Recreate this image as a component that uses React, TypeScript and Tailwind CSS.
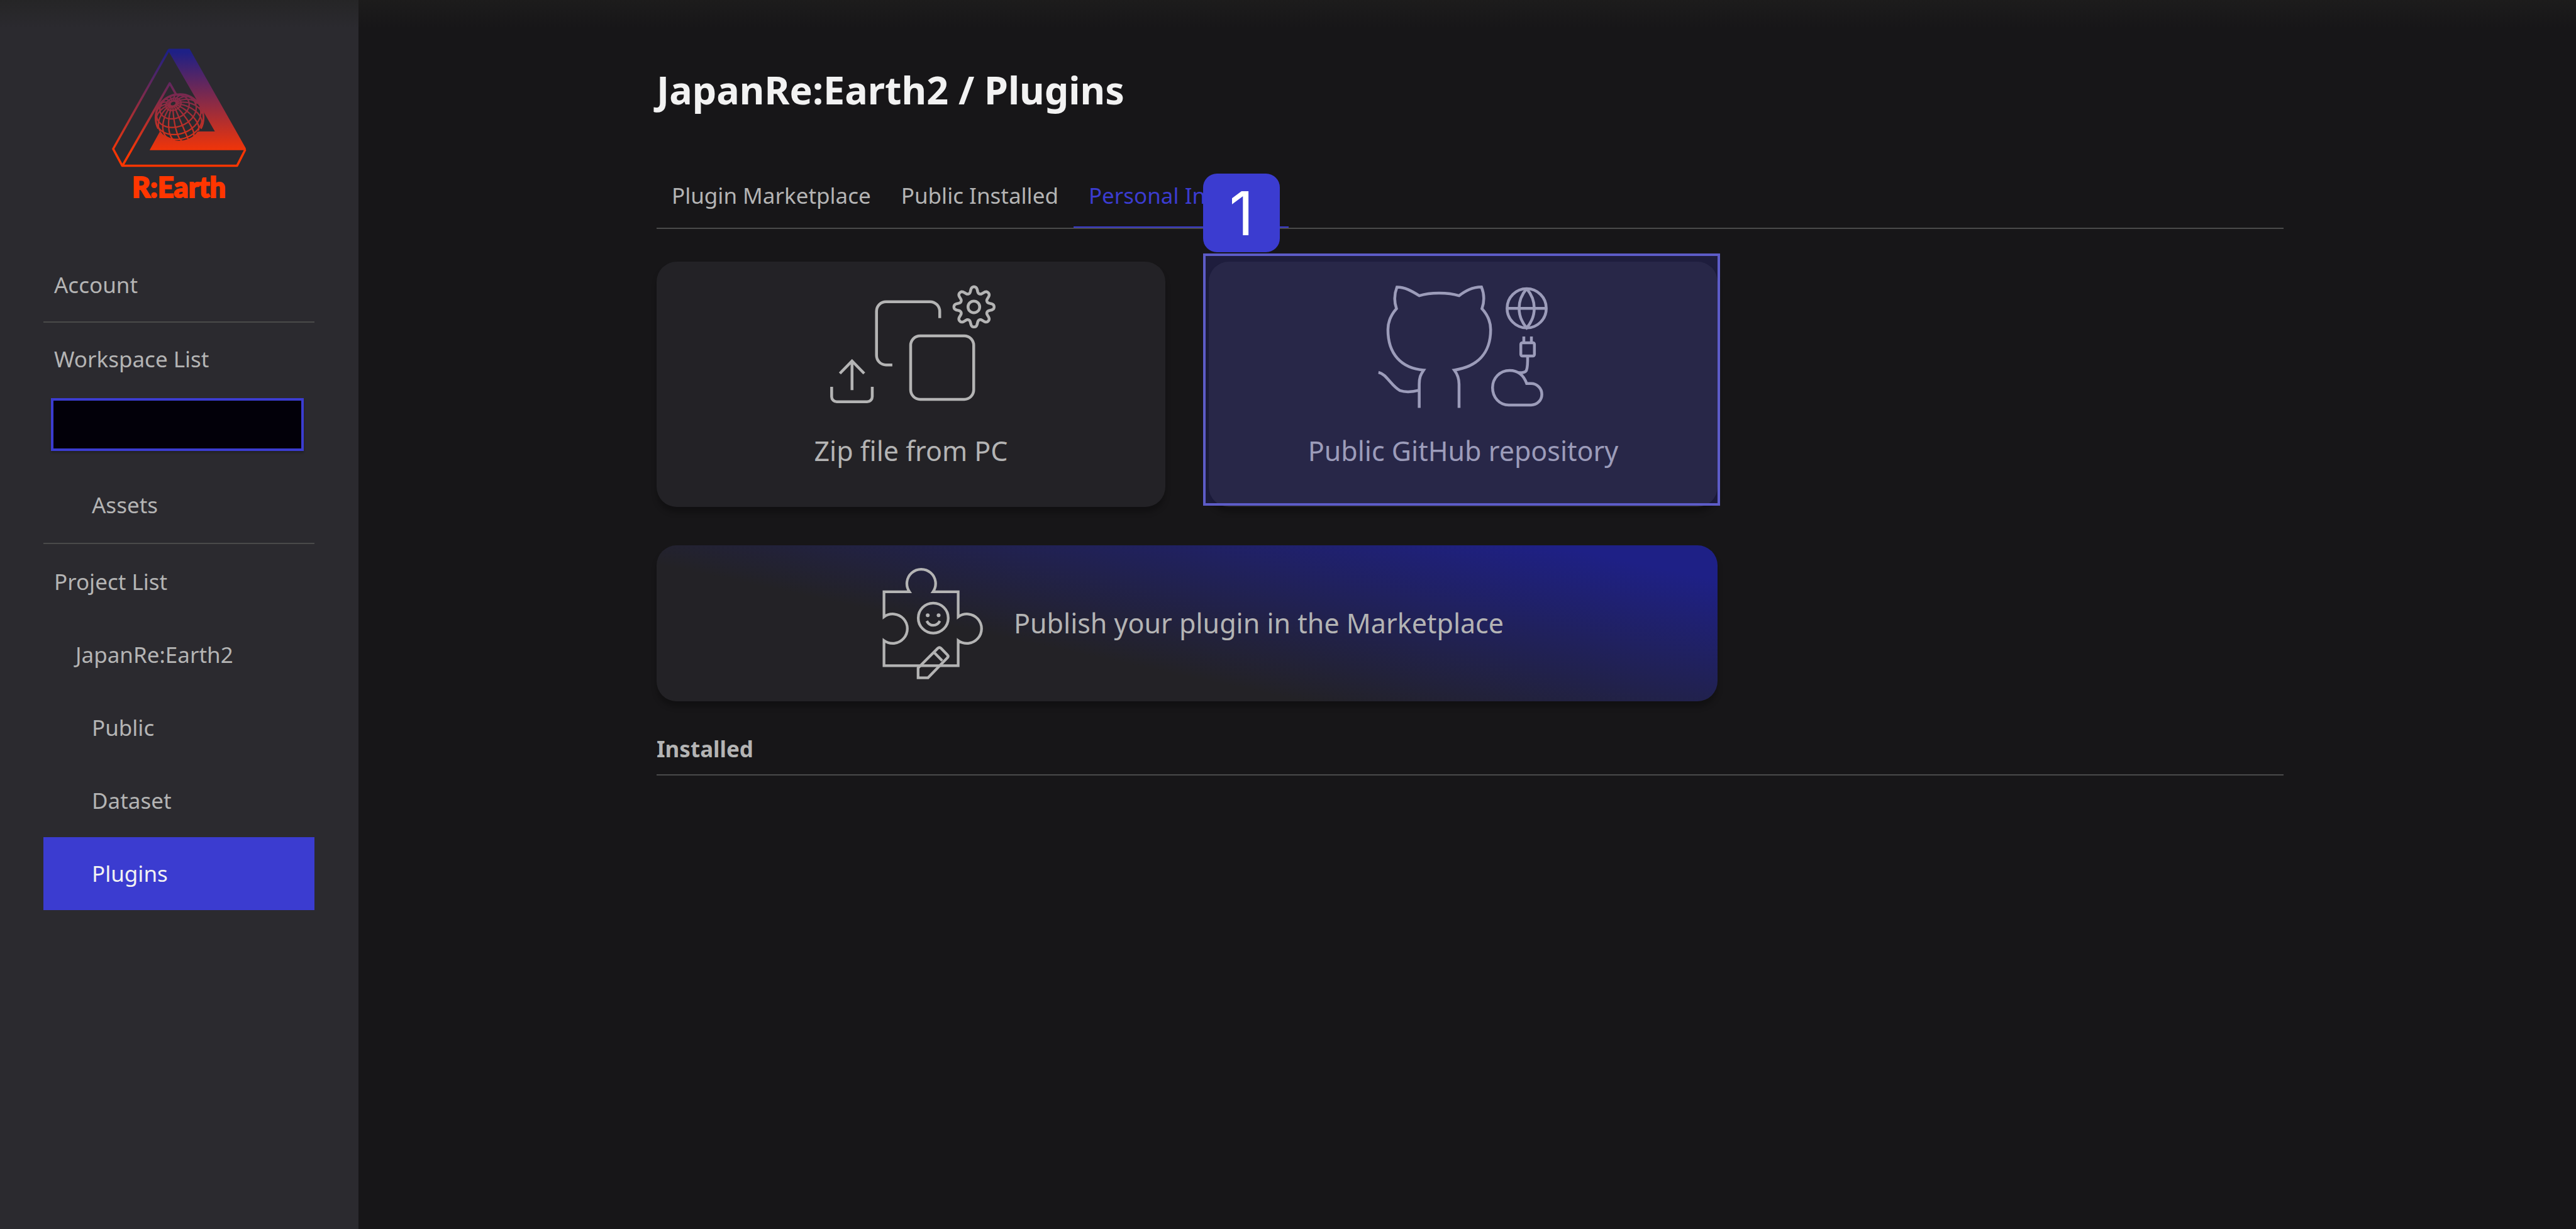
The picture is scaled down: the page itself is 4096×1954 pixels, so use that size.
import type { ReactNode } from "react";

const GLOBE = { x: 531, y: 563, r: 146 };

/** Great circles and parallels of a tilted sphere, visible half only. */
function graticule(): string {
  const { x: cx, y: cy, r } = GLOBE;
  const poleDistance = 0.67;
  const roll = -0.4;
  const cosTilt = Math.sqrt(1 - poleDistance * poleDistance);
  const project = (colat: number, lon: number) => {
    const sx = Math.sin(colat) * Math.sin(lon);
    const sy = Math.cos(colat);
    const sz = Math.sin(colat) * Math.cos(lon);
    const py = sy * poleDistance - sz * cosTilt;
    const depth = sy * cosTilt + sz * poleDistance;
    const rx = sx * Math.cos(roll) + py * Math.sin(roll);
    const ry = -sx * Math.sin(roll) + py * Math.cos(roll);
    return { x: cx + rx * r, y: cy - ry * r, visible: depth >= 0 };
  };
  const trace = (points: { x: number; y: number; visible: boolean }[]) => {
    let path = "";
    let drawing = false;
    for (const p of points) {
      if (p.visible) {
        path += `${drawing ? "L" : "M"}${p.x.toFixed(1)} ${p.y.toFixed(1)}`;
      }
      drawing = p.visible;
    }
    return path;
  };
  const rad = Math.PI / 180;
  let d = "";
  for (let lon = 0; lon < 360; lon += 20) {
    const points = [];
    for (let colat = 8; colat <= 170; colat += 3) points.push(project(colat * rad, lon * rad));
    d += trace(points);
  }
  for (const colat of [8, 20, 41, 63, 85, 108]) {
    const points = [];
    for (let lon = 0; lon <= 360; lon += 4) points.push(project(colat * rad, lon * rad));
    d += trace(points);
  }
  return d;
}

/** Closed outline of an eight-toothed wheel. */
function gear(cx: number, cy: number): string {
  const steps = 240;
  let d = "";
  for (let i = 0; i < steps; i++) {
    const a = (i / steps) * Math.PI * 2;
    const wave = Math.tanh(1.3 * Math.cos(8 * a)) / Math.tanh(1.3);
    const r = 108 + 19 * wave;
    d += `${i === 0 ? "M" : "L"}${(cx + r * Math.cos(a)).toFixed(1)} ${(cy + r * Math.sin(a)).toFixed(1)}`;
  }
  return `${d}Z`;
}

const graticulePath = graticule();
const gearPath = gear(967, 201);

function Logo() {
  return (
    <a href="#home" className="flex flex-col items-center text-[#ff3600]">
      <svg viewBox="92 118 880 770" className="h-[194px] w-[222px]" fill="none" aria-hidden="true">
        <defs>
          <linearGradient id="flame" gradientUnits="userSpaceOnUse" x1="0" y1="150" x2="0" y2="810">
            <stop offset="0" stopColor="#1e2086" />
            <stop offset="1" stopColor="#ff3600" />
          </linearGradient>
        </defs>
        <path
          fill="url(#flame)"
          d="M465 128H597L952 756V768H345L410 650H757L465 145Z"
        />
        <g stroke="url(#flame)" strokeWidth="14" strokeLinejoin="round">
          <path d="M467 134L115 760L172 866H897L949 764" />
          <path d="M176 862L472 346L520 430" />
        </g>
        <circle cx={GLOBE.x} cy={GLOBE.y} r={GLOBE.r} fill="#2b2a2f" />
        <path d={graticulePath} stroke="url(#flame)" strokeWidth="9" />
        <path
          d="M400 632A148 148 0 0 1 531 415A148 148 0 0 1 668 632"
          stroke="url(#flame)"
          strokeWidth="12"
        />
      </svg>
      <span className="font-['Lato',sans-serif] text-[45px] leading-[56px] font-black [-webkit-text-stroke:2px_#ff3600]">
        R:Earth
      </span>
    </a>
  );
}

function ZipIcon() {
  return (
    <svg viewBox="18 50 1100 800" className="h-[201px] w-[277px]" fill="none" stroke="currentColor" strokeWidth="18" aria-hidden="true">
      <rect x="566" y="384" width="399" height="402" rx="60" />
      <path d="M750 272V230A62 62 0 0 0 688 168H410A60 60 0 0 0 350 228V508A60 60 0 0 0 410 568H450" />
      <path d="M195 728V545M118 622L195 543L272 622" />
      <path d="M66 707V769A32 32 0 0 0 98 801H291A32 32 0 0 0 323 769V707" />
      <circle cx="966" cy="201" r="37" />
      <path d={gearPath} strokeLinejoin="round" />
    </svg>
  );
}

function GithubIcon() {
  return (
    <svg viewBox="56 50 1100 800" className="h-[201px] w-[277px]" fill="none" stroke="currentColor" strokeWidth="18" aria-hidden="true">
      <path d="M328 840V690C328 650 336 630 356 601C215 590 130 500 130 345C130 290 150 250 184 212C166 160 170 120 187 76C235 75 280 100 328 130C400 108 510 108 580 130C620 100 660 76 722 75C742 125 742 165 725 212C760 250 780 290 780 345C780 500 690 580 550 601C572 630 580 655 580 690V840" />
      <path d="M70 615C120 625 150 700 205 730C240 742 290 738 328 728" />
      <circle cx="1008" cy="210" r="124" />
      <path d="M885 210H1131M1008 86C944 160 944 260 1008 334C1072 260 1072 160 1008 86" />
      <rect x="971" y="428" width="86" height="84" rx="10" />
      <path d="M990 388V428M1038 388V428" />
      <path d="M1014 512C1015 560 1012 590 1006 604C998 616 985 618 955 617" />
      <path d="M895 822H1036A68 68 0 0 0 1036 686H1008C990 635 955 603 900 603C838 603 792 652 792 712C792 774 836 822 895 822Z" />
    </svg>
  );
}

function PuzzleIcon() {
  return (
    <svg viewBox="-15 40 725 720" className="h-[181px] w-[182px]" fill="none" stroke="currentColor" strokeWidth="17" aria-hidden="true">
      <path d="M71 198H232A91 91 0 1 1 382 198H541V357A93 93 0 1 1 541 507V666H71V507A93 93 0 1 0 71 357Z" />
      <circle cx="383" cy="365" r="95" />
      <path d="M342 383C360 420 406 420 425 383" />
      <circle cx="348" cy="347" r="12" fill="currentColor" stroke="none" />
      <circle cx="417" cy="347" r="12" fill="currentColor" stroke="none" />
      <path d="M287 743V681L412 556Q422 547 432 556L472 597Q482 607 472 617L350 743ZM388 582L440 635" />
    </svg>
  );
}

function NavItem({ children, className, active }: { children: ReactNode; className: string; active?: boolean }) {
  return (
    <li>
      <a
        href="#nav"
        aria-current={active ? "page" : undefined}
        className={`flex h-[116px] items-center text-[35px] leading-[56px] ${active ? "bg-[#3b3cd0] text-[#f2f2f2]" : ""} ${className}`}
      >
        {children}
      </a>
    </li>
  );
}

function Sidebar() {
  return (
    <aside className="flex w-[570px] shrink-0 flex-col bg-[#2b2a2f] pt-[75px] pr-[70px] pl-[69px]">
      <Logo />
      <nav className="mt-[70px]">
        <ul className="border-b-2 border-[#4a4a4a]">
          <NavItem className="pl-[17px]">Account</NavItem>
        </ul>
        <ul className="border-b-2 border-[#4a4a4a] pb-0.5">
          <NavItem className="pl-[17px]">Workspace List</NavItem>
          <li className="h-[116px] pt-1 pr-[17px] pl-3">
            <a
              href="#workspace"
              aria-label="Workspace"
              className="block h-[84px] border-4 border-[#3b3cd0] bg-[#020009] shadow-[0_3px_3px_rgba(0,0,0,0.2)]"
            />
          </li>
          <NavItem className="pl-[77px]">Assets</NavItem>
        </ul>
        <ul className="pt-0.5">
          <NavItem className="pl-[17px]">Project List</NavItem>
          <NavItem className="pl-[51px]">JapanRe:Earth2</NavItem>
          <NavItem className="pl-[77px]">Public</NavItem>
          <NavItem className="pl-[77px]">Dataset</NavItem>
          <NavItem className="pl-[77px]" active>
            Plugins
          </NavItem>
        </ul>
      </nav>
    </aside>
  );
}

function Tab({ label, active }: { label: string; active?: boolean }) {
  return (
    <button
      type="button"
      role="tab"
      aria-selected={!!active}
      className={`border-b-2 px-6 pb-[21px] text-[35px] leading-[56px] ${active ? "border-[#3b3cd0] text-[#3b3cd0]" : "border-transparent"}`}
    >
      {label}
    </button>
  );
}

function ImportCard({ icon, label }: { icon: ReactNode; label: string }) {
  return (
    <button
      type="button"
      className="flex w-full flex-col items-center gap-9 rounded-[32px] bg-[#232226] pt-[34px] pb-[59px] text-[43px] leading-[60px] shadow-[0_9px_9px_rgba(0,0,0,0.25)]"
    >
      {icon}
      {label}
    </button>
  );
}

export default function App() {
  return (
    <div className="relative flex min-h-screen bg-[#171618] font-['Noto_Sans',sans-serif] text-[#b4b4b4]">
      <Sidebar />
      <main className="min-w-0 flex-1 pt-[101px] pr-[465px] pl-[474px]">
        <h1 className="text-[61px] leading-[84px] font-bold text-[#f2f2f2]">JapanRe:Earth2 / Plugins</h1>
        <div role="tablist" className="mt-[98px] flex border-b-2 border-[#4a4a4a]">
          <Tab label="Plugin Marketplace" />
          <Tab label="Public Installed" />
          <Tab label="Personal Installed" active />
        </div>
        <div className="mt-[52px] grid max-w-[1687px] grid-cols-2 gap-x-[69px] gap-y-[61px]">
          <ImportCard icon={<ZipIcon />} label="Zip file from PC" />
          <div className="relative">
            <ImportCard icon={<GithubIcon />} label="Public GitHub repository" />
            <div className="pointer-events-none absolute -top-[13px] -right-[4px] bottom-[2px] -left-[9px] border-4 border-[#5d5cc8] bg-[#3b3cd0]/20 bg-clip-padding" />
            <div className="absolute -top-[140px] -left-[9px] flex h-[125px] w-[122px] items-center justify-center rounded-[22px] bg-[#3b3cd0] font-['Inter',sans-serif] text-[96px] leading-none text-white">
              1
            </div>
          </div>
          <button
            type="button"
            className="col-span-2 flex h-[248px] items-center justify-center gap-[46px] rounded-[32px] bg-[linear-gradient(12deg,#232226_36%,#1e2086_91%)] text-[43px] leading-[60px] shadow-[0_9px_9px_rgba(0,0,0,0.25)]"
          >
            <PuzzleIcon />
            Publish your plugin in the Marketplace
          </button>
        </div>
        <h2 className="mt-12 border-b-2 border-[#4a4a4a] pb-3 text-[35px] leading-[56px] font-bold">Installed</h2>
      </main>
      <div className="pointer-events-none absolute inset-x-0 top-0 h-[44px] bg-linear-to-b from-[#21211f]/55 to-[#21211f]/0" />
    </div>
  );
}
